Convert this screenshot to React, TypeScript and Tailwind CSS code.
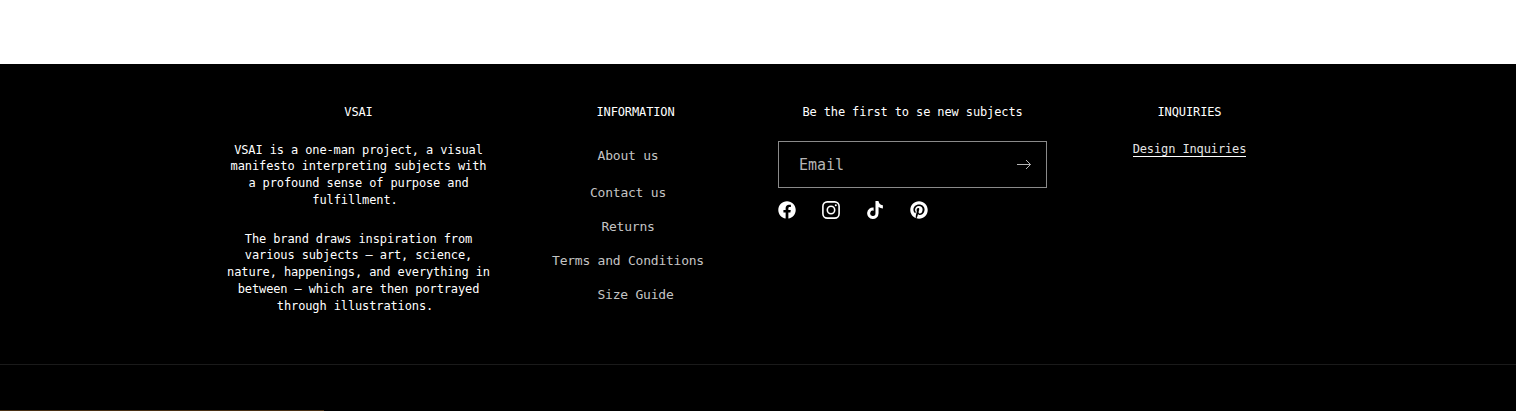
import React from "react";
import { FaFacebook, FaPinterest, FaTiktok } from "react-icons/fa";

const links = ["Contact us", "Returns", "Terms and Conditions"];

export default function App() {
  return (
    <div className="h-[411px] overflow-hidden bg-white font-['DejaVu_Sans_Mono',monospace]">
      <div className="h-16" />
      <footer className="relative h-[347px] bg-black text-white">
        <div className="grid h-[300px] w-[1100px] grid-cols-4 gap-2 ml-[224px] pt-10 text-center">
          {/* About */}
          <div>
            <h3 className="text-[12px] leading-4 tracking-[-0.12px]">VSAI</h3>
            <p className="mt-[21.5px] text-[12px] leading-[16.8px] tracking-[-0.12px]">
              VSAI is a one-man project, a visual manifesto interpreting subjects with a profound sense of purpose and <span className="pr-[7px]">fulfillment.</span>
            </p>
            <p className="mt-[22px] text-[12px] leading-[16.8px] tracking-[-0.12px]">
              The brand draws inspiration from various subjects – art, science, nature, happenings, and everything in between – which are then portrayed <span className="pr-[7px]">through illustrations.</span>
            </p>
          </div>

          {/* Links */}
          <div>
            <h3 className="text-[12px] leading-4 tracking-[-0.12px]">INFORMATION</h3>
            <ul className="mt-[27px] text-[13px] leading-[17px] tracking-[-0.23px] text-[#c4c4c4]">
              <li className="mb-5 pr-[15px]">About us</li>
              {links.map((l) => (
                <li key={l} className="mb-[17px] pr-[15px]">{l}</li>
              ))}
              <li>Size Guide</li>
            </ul>
          </div>

          {/* Newsletter */}
          <div>
            <h3 className="text-[12px] leading-4 tracking-[-0.12px]">Be the first to se new subjects</h3>
            <div className="mt-[21px] flex h-[47px] items-center justify-between border border-[#8a8a8a] pl-5 pr-[15px] text-[15px] text-[#b5b5b5]">
              <span className="pt-px">Email</span>
              <svg width="14" height="11" viewBox="0 0 14 11" fill="none" stroke="currentColor">
                <path d="M0 5.5H13.5M9 1 13.5 5.5 9 10" />
              </svg>
            </div>
            <div className="mt-[13px] flex gap-[26px]">
              <FaFacebook size={18} />
              <svg width="18" height="18" viewBox="0 0 18 18" fill="none" stroke="currentColor" strokeWidth="1.6">
                <rect x=".9" y=".9" width="16.2" height="16.2" rx="4.4" />
                <circle cx="9" cy="9" r="3.7" />
                <circle cx="13.8" cy="4.2" r="1" fill="currentColor" stroke="none" />
              </svg>
              <FaTiktok size={18} />
              <FaPinterest size={18} />
            </div>
          </div>

          {/* Inquiries */}
          <div>
            <h3 className="text-[12px] leading-4 tracking-[-0.12px]">INQUIRIES</h3>
            <div className="mt-[16px]">
              <a className="border-b border-white text-[12px] leading-4 tracking-[-0.12px] text-[#e4e4e4]">Design Inquiries</a>
            </div>
          </div>
        </div>
        <div className="border-t border-[#1a1a1a]" />
        <div className="absolute bottom-0 left-0 h-px w-[324px] bg-[#4a3216]" />
      </footer>
    </div>
  );
}
